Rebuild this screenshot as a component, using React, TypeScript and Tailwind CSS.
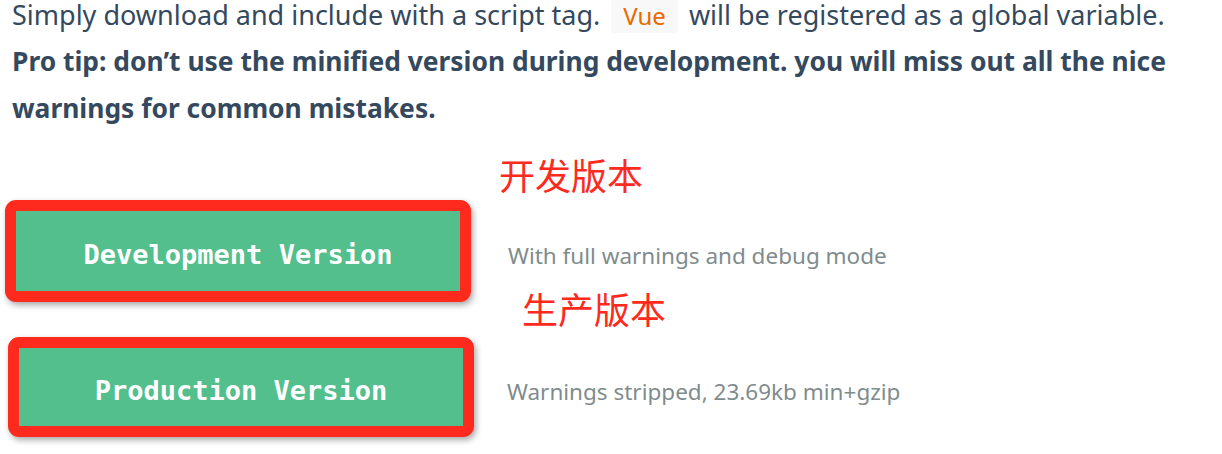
const body = '"Noto Sans", "Open Sans", sans-serif'
const mono = '"DejaVu Sans Mono", "Liberation Mono", monospace'
const cjk = '"Noto Sans CJK SC", sans-serif'

interface versionRow {
  label: string
  note: string
  boxClass: string
  noteClass: string
}

const rows: versionRow[] = [
  { label: 'Development Version', note: 'With full warnings and debug mode', boxClass: 'ml-[5px] w-[466px] h-[102px]', noteClass: 'ml-[37px]' },
  { label: 'Production Version', note: 'Warnings stripped, 23.69kb min+gzip', boxClass: 'ml-[8px] w-[466px] h-[100px]', noteClass: 'ml-[33px]' },
]

function VersionButton({ row }: { row: versionRow }) {
  return (
    <div className="flex items-center">
      <div className={`${row.boxClass} rounded-[11px] border-[11px] border-[#fd2a1d] bg-[#52bf8d] shadow-[2px_3px_6px_rgba(0,0,0,0.35)] flex items-center justify-center`}>
        <span className="mt-[8px] text-[27px] font-bold text-white" style={{ fontFamily: mono }}>{row.label}</span>
      </div>
      <span className={`${row.noteClass} mt-[10px] text-[22.5px] text-[#7f8c8d]`} style={{ fontFamily: body }}>{row.note}</span>
    </div>
  )
}

function Label({ text, className }: { text: string, className: string }) {
  return (
    <div className={`${className} text-[36px] leading-none text-[#fd2a1d]`} style={{ fontFamily: cjk }}>{text}</div>
  )
}

export default function App() {
  return (
    <main className="w-[1222px] h-[454px] overflow-hidden bg-white">
      <div className="pl-[12px] w-[1200px] text-[#34495e]" style={{ fontFamily: body }}>
        <p className="text-[27px] leading-[30px]">
          Simply download and include with a script tag.{' '}
          <code className="mx-[4px] px-[12px] py-[1px] rounded-[3px] bg-[#f8f8f8] text-[#e96900] text-[24px]" style={{ fontFamily: body }}>Vue</code>
          {' '}will be registered as a global variable.
        </p>
        <p className="mt-[7px] text-[26.4px] leading-[47px] font-bold">
          Pro tip: don’t use the minified version during development. you will miss out all the nice warnings for common mistakes.
        </p>
      </div>

      <Label text="开发版本" className="ml-[499px] mt-[24px]" />
      <div className="mt-[8px]">
        <VersionButton row={rows[0]} />
      </div>
      <Label text="生产版本" className="ml-[522px] -mt-[12px]" />
      <div className="mt-[11px]">
        <VersionButton row={rows[1]} />
      </div>
    </main>
  )
}
